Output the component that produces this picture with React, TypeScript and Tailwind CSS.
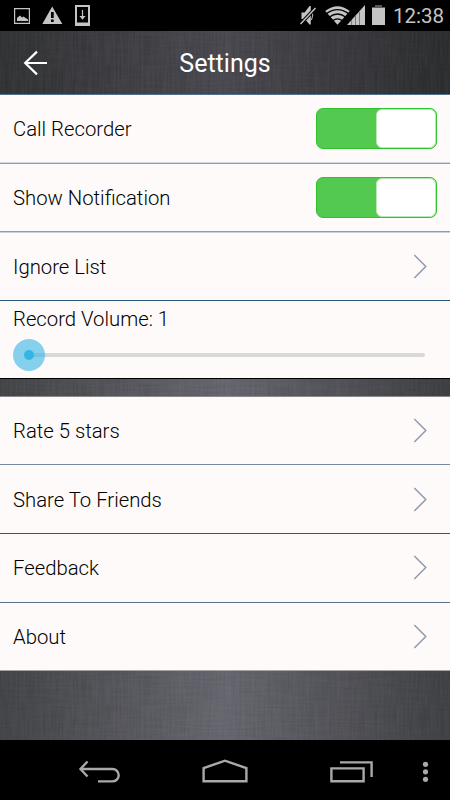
import { useState, type ReactNode } from 'react';

// Dark brushed-metal texture behind the header and gaps
const Brushed = ({ id }: { id: string }) => (
  <svg className="absolute inset-0 h-full w-full opacity-12" aria-hidden="true">
    <filter id={`${id}-h`} x="0" y="0" width="100%" height="100%">
      <feTurbulence type="fractalNoise" baseFrequency="0.03 0.5" numOctaves="2" seed="4" />
      <feColorMatrix values="0 0 0 0 0  0 0 0 0 0  0 0 0 0 0  1.2 0 0 0 -0.4" />
    </filter>
    <filter id={`${id}-v`} x="0" y="0" width="100%" height="100%">
      <feTurbulence type="fractalNoise" baseFrequency="0.5 0.03" numOctaves="2" seed="9" />
      <feColorMatrix values="0 0 0 0 0.7  0 0 0 0 0.7  0 0 0 0 0.7  0.8 0 0 0 -0.25" />
    </filter>
    <rect width="100%" height="100%" filter={`url(#${id}-h)`} />
    <rect width="100%" height="100%" filter={`url(#${id}-v)`} />
  </svg>
);

const Chevron = () => (
  <svg className="mr-[22px] h-[26px] w-[15px]" viewBox="0 0 15 26" fill="none" stroke="#8f9bad" strokeWidth="1.5">
    <path d="M1.3 1 12.8 12.5 1.3 24" />
  </svg>
);

const Toggle = () => {
  const [on, setOn] = useState(true);

  return (
    <button
      role="switch"
      aria-checked={on}
      onClick={() => setOn(!on)}
      className={`mr-[13px] flex h-[41px] w-[121px] rounded-[7px] border border-[#2fc32f] ${on ? 'justify-end bg-[#54c94f]' : 'justify-start bg-gray-300'}`}
    >
      <span className="h-[39px] w-[60px] rounded-[6px] border border-[#b5eab3] bg-white" />
    </button>
  );
};

const Row = ({ label, className, children }: { label: string; className: string; children: ReactNode }) => (
  <div className={`flex shrink-0 items-center justify-between bg-[#fefaf9] pl-[13px] ${className}`}>
    <span className="text-[20.3px] leading-6 font-light">{label}</span>
    {children}
  </div>
);

const StatusBar = () => (
  <div className="flex h-[31px] shrink-0 bg-black text-[#c4c4c4]">
    <svg className="h-[31px] w-[100px]" viewBox="0 0 100 31" fill="currentColor">
      <path d="M14 8h16v16H14zM15.2 9.2v13.6h13.6V9.2z" fillRule="evenodd" />
      <path d="M17 21v-3l3-2.5 2 2 1.5-1 4.5 3V21z" />
      <path d="M52.2 6.5 62.3 24H42.3z" />
      <path d="M51 12h2.7v6H51zM51 19.5h2.7V22H51z" fill="#000" />
      <path d="M75 5h15v21H75zM77 7v15.5h11V7z" fillRule="evenodd" />
      <path d="M81.9 10h1.2v6h2.5l-3.1 3.7-3.1-3.7h2.5z" />
    </svg>
    <svg className="ml-[190px] h-[31px] w-[96px]" viewBox="290 0 96 31" fill="currentColor">
      <path d="M301.5 12.5h3.2l4.8-6.5h1.3v18.5h-1.3l-4.8-5.5h-3.2z" />
      <path d="M311.5 10q2.5 5 0 10" fill="none" stroke="currentColor" />
      <path d="m299.5 25 16-17" stroke="#000" strokeWidth="3.4" />
      <path d="m300.5 24 15-16" stroke="currentColor" strokeWidth="1.4" />
      <path d="M325.2 11Q337.5 1.5 349.8 11L337.5 24.8z" />
      <path d="M326.5 13.6q11-8 22 0M329.5 17q8-6 16 0M332.8 20.6q4.7-3.6 9.4 0" fill="none" stroke="#000" strokeWidth="1.3" />
      <path d="M347 25 365 5v20z" />
      <path d="M351.6 20v5M355.5 16v9M359.5 12v13" stroke="#777" strokeWidth="1" />
      <path d="M372 7.5h13V25h-13z" />
      <path d="M375 5h7v2.5h-7z" fill="#555" />
    </svg>
    <span className="mt-1 ml-[7px] text-[20.5px] leading-6 font-normal">12:38</span>
  </div>
);

const NavBar = () => (
  <div className="h-[60px] shrink-0 bg-black">
    <svg className="h-[60px] w-[450px]" viewBox="0 740 450 60" fill="none" stroke="#a9a9a9" strokeWidth="2.4">
      <path d="M81 769h31.5a6.2 6.2 0 0 1 0 12.4H98" />
      <path d="m87.5 761.5-7 7.5 7 7.5" />
      <path d="M203.6 768.1v13.2h42.8v-13.2L225 760.7z" />
      <path d="M331.4 768.4h32.2v12.8h-32.2z" />
      <path d="M340 762.4h31.6V777" />
      <g fill="#a9a9a9" stroke="none">
        <circle cx="425.5" cy="764.3" r="2.6" />
        <circle cx="425.5" cy="771.8" r="2.6" />
        <circle cx="425.5" cy="779.3" r="2.6" />
      </g>
    </svg>
  </div>
);

export default function App() {
  return (
    <div className="flex h-[800px] w-[450px] flex-col overflow-hidden bg-black font-['Roboto',sans-serif] text-black">
      <StatusBar />

      <header className="relative grid h-[64px] shrink-0 grid-cols-[70px_1fr_70px] items-center border-b border-[#4d718f] bg-linear-to-r from-[#313234] via-[#49484f] to-[#2b2c2e] text-white">
        <Brushed id="head" />
        <button className="relative ml-[23px]" aria-label="Back">
          <svg className="h-[26px] w-[26px]" viewBox="0 0 26 26" fill="none" stroke="currentColor" strokeWidth="2.2">
            <path d="M24 13H2M14 1.6 2.2 13 14 24.4" />
          </svg>
        </button>
        <h1 className="relative pt-[3px] text-center text-[25px] leading-8 font-normal">Settings</h1>
      </header>

      <Row label="Call Recorder" className="h-[69px] border-b border-[#8d9bac] pb-px shadow-[inset_0_-1px_#d3d6dc]">
        <Toggle />
      </Row>
      <Row label="Show Notification" className="h-[68px] border-b border-[#8d9bac]">
        <Toggle />
      </Row>
      <Row label="Ignore List" className="h-[69px] border-t border-b border-t-[#ccd1d8] border-b-[#2a5878]">
        <Chevron />
      </Row>

      <div className="h-[78px] shrink-0 border-b border-black bg-[#fefaf9] px-[13px] pt-[6px]">
        <div className="text-[20.3px] leading-6 font-light">Record Volume: 1</div>
        <div className="relative mt-2 flex h-8 items-center">
          <div className="mr-3 ml-4 h-1 flex-1 rounded-full bg-[#d8d8d7]" />
          <div className="absolute left-0 flex h-8 w-8 items-center justify-center rounded-full bg-[#33b5e5]/60">
            <span className="h-[10px] w-[10px] rounded-full bg-[#33b5e5]" />
          </div>
        </div>
      </div>

      <div className="relative h-[18px] shrink-0 border-b border-[#8a8a8c] bg-linear-to-r from-[#434446] via-[#66666f] to-[#3d3e41]">
        <Brushed id="gap" />
      </div>

      <Row label="Rate 5 stars" className="h-[68px] border-b border-[#7789a0]">
        <Chevron />
      </Row>
      <Row label="Share To Friends" className="h-[69px] border-b border-[#2a5878] pt-px">
        <Chevron />
      </Row>
      <Row label="Feedback" className="h-[69px] border-b border-[#58708c]">
        <Chevron />
      </Row>
      <Row label="About" className="h-[68px] border-b border-[#a5a5a6]">
        <Chevron />
      </Row>

      <div className="relative flex-1 bg-linear-to-r from-[#434447] from-0% via-[#66666f] via-50% to-[#3f4043] to-100%">
        <Brushed id="foot" />
      </div>

      <NavBar />
    </div>
  );
}
